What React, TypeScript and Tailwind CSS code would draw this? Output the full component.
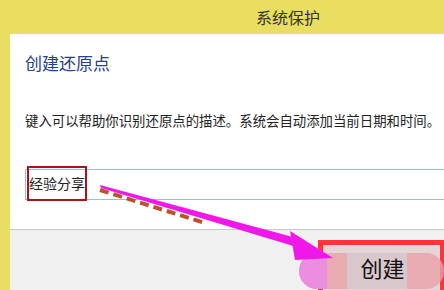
import React from 'react';

function Arrow() {
  return (
    <svg className="absolute left-0 top-0 pointer-events-none" width="444" height="290" viewBox="0 0 444 290">
      <path d="M100 190 L205 223" stroke="#c0502a" strokeWidth="4" strokeDasharray="9 5" />
      <path d="M100 185 L101 188 L300 248 L304 240 Z" fill="#f018e8" />
      <path d="M290 231 L333 258 L295 260 Z" fill="#f018e8" />
    </svg>
  );
}

function App() {
  return (
    <div className="relative w-[444px] h-[290px] overflow-hidden bg-[#e9dd62] font-['Noto_Sans_CJK_SC',sans-serif]">
      <div className="h-[34px] flex items-center justify-center pl-[132px] text-[16px] text-[#333]">
        系统保护
      </div>
      <div className="ml-[10px] flex flex-col h-[256px]">
        <div className="bg-white h-[196px] border-b border-[#c8c8c8] pl-[15px] pt-[16px]">
          <div className="text-[17px] text-[#25408f] leading-[26px]">创建还原点</div>
          <div className="mt-[35px] text-[13.4px] text-[#222] whitespace-nowrap leading-[18px]">
            键入可以帮助你识别还原点的描述。系统会自动添加当前日期和时间。
          </div>
          <div className="mt-[40px] h-[31px] border border-[#9dbcd6] border-r-0 flex items-center">
            <div className="relative h-[35px] w-[60px] -mt-[3px] ml-[1px] border-2 border-[#a8141a] flex items-center">
              <span className="text-[14px] text-[#222] whitespace-nowrap">经验分享</span>
            </div>
          </div>
        </div>
        <div className="flex-1 bg-[#f0f0f0] flex justify-end items-end">
          <div className="relative w-[127px] h-[50px] border-[5px] border-[#ff3338] border-b-0 mr-[-1px] bg-[#e5d5d7]">
            <div className="absolute left-[-24px] top-[8px] w-[145px] h-[36px] rounded-full bg-[#e8a0a8] opacity-80" />
            <div className="absolute left-[24px] top-[8px] w-[60px] h-[36px] bg-[#d8c8cc]" />
            <div className="absolute left-[-24px] top-[8px] w-[28px] h-[36px] rounded-l-full bg-[#ec8ee0]" />
            <div className="relative flex items-center justify-center h-full text-[22px] text-[#111] pl-[2px]">创建</div>
          </div>
        </div>
      </div>
      <Arrow />
    </div>
  );
}

export default App;
